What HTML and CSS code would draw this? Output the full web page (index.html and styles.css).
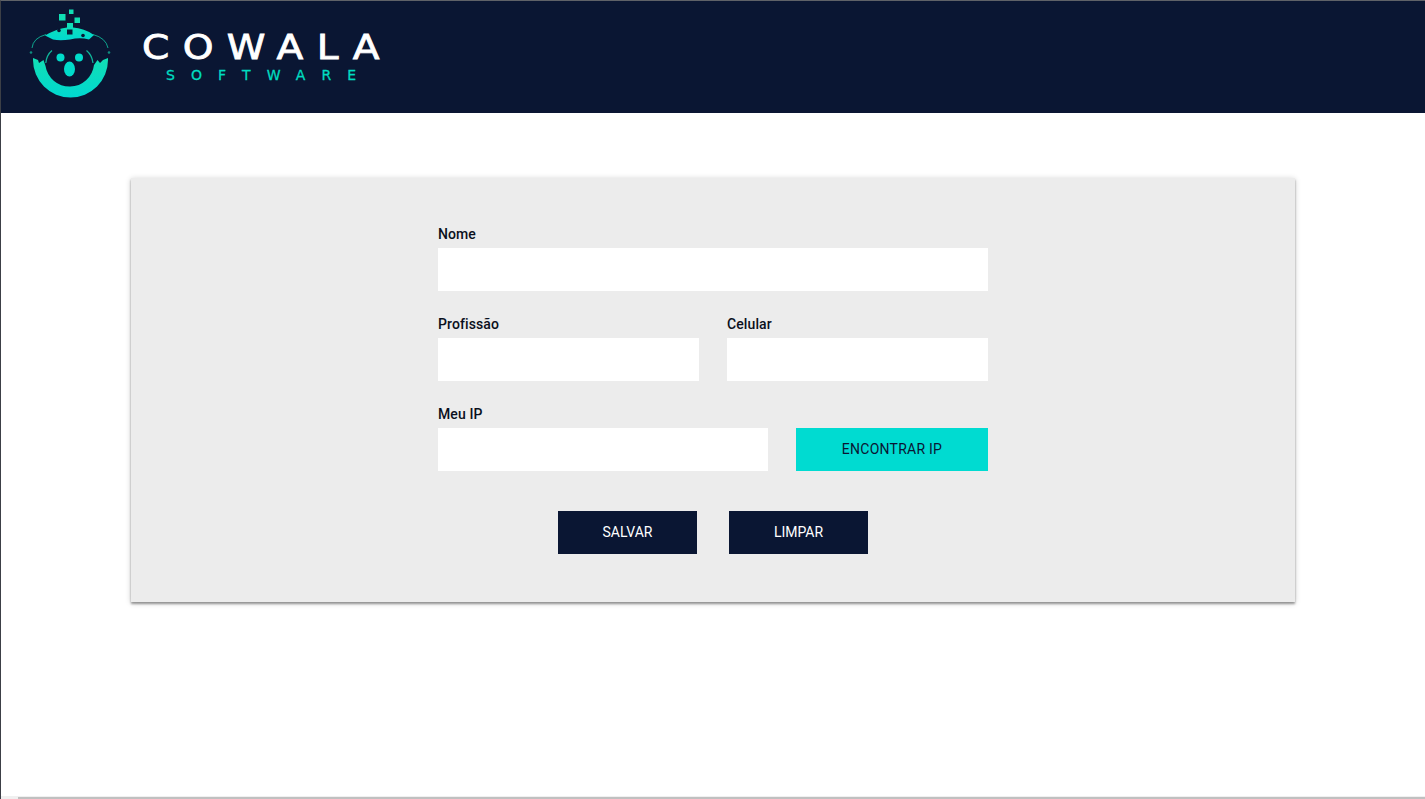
FILE: index.html
```html
<!DOCTYPE html>
<html lang="pt-BR">
<head>
    <meta charset="UTF-8">
    <meta name="viewport" content="width=device-width, initial-scale=1.0">
    <title>Cowala Software</title>
    <link rel="stylesheet" href="styles.css">
</head>
<body>
    <header class="topbar">
        <svg class="logo-icon" viewBox="1 1 129 112" width="129" height="112" aria-hidden="true">
            <defs>
                <linearGradient id="tealFade" x1="0" y1="0" x2="0" y2="1">
                    <stop offset="0" stop-color="#12dfb4"/>
                    <stop offset="1" stop-color="#00d8d0"/>
                </linearGradient>
            </defs>
            <rect x="59" y="14" width="6.500" height="6.500" fill="#10dfb4"/>
            <rect x="69" y="9.500" width="4.500" height="4.500" fill="#10dfb4"/>
            <rect x="74.500" y="17.500" width="5.500" height="5.500" fill="#10dfb4"/>
            <path d="M45 35.500Q56 29 67 27.500V23H73V27.500Q84 28 94 35L89 39.500Q80 37 70 39.500Q60 41 53 39.500Z" fill="url(#tealFade)"/>
            <rect x="67" y="29.500" width="5.500" height="5" fill="#0a1633"/>
            <circle cx="59" cy="30.500" r="1.800" fill="#0a1633"/>
            <circle cx="83" cy="35.500" r="1.800" fill="#0a1633"/>
            <path d="M33 58L38 60L39 63L43.500 60L45.500 66A24.500 24.500 0 0 0 94 65L97.500 60L100 63L103 60L108 58L108 60A37.500 37.500 0 0 1 33 60Z" fill="url(#tealFade)"/>
            <path d="M45.800 63Q46.500 55 52 50.500M93 63Q92 55 86.500 50.500" fill="none" stroke="#10dfb4" stroke-width="1.200" stroke-opacity="0.800"/>
            <path d="M32 48Q33 38 46 34.500M108 48Q106 38 93 34.500" fill="none" stroke="#10dfb4" stroke-width="1" stroke-opacity="0.700"/>
            <circle cx="31" cy="52.500" r="1.300" fill="#10dfb4" fill-opacity="0.600"/>
            <circle cx="109" cy="52.500" r="1.300" fill="#10dfb4" fill-opacity="0.600"/>
            <circle cx="60.500" cy="57.500" r="4" fill="#00dccb"/>
            <circle cx="79" cy="57.500" r="4" fill="#00dccb"/>
            <ellipse cx="69.500" cy="69" rx="5.500" ry="7.500" fill="#00dccb"/>
        </svg>
        <div class="logo-text">
            <span class="logo-name">COWALA</span>
            <span class="logo-sub">SOFTWARE</span>
        </div>
    </header>

    <main class="content">
        <form class="card">
            <div class="fields">
                <div class="row">
                    <div class="field grow">
                        <label for="nome">Nome</label>
                        <input type="text" id="nome" name="nome">
                    </div>
                </div>
                <div class="row">
                    <div class="field grow">
                        <label for="profissao">Profissão</label>
                        <input type="text" id="profissao" name="profissao">
                    </div>
                    <div class="field grow">
                        <label for="celular">Celular</label>
                        <input type="text" id="celular" name="celular">
                    </div>
                </div>
                <div class="row">
                    <div class="field grow">
                        <label for="ip">Meu IP</label>
                        <input type="text" id="ip" name="ip">
                    </div>
                    <button type="button" class="btn btn-ip">ENCONTRAR IP</button>
                </div>
            </div>
            <div class="actions">
                <button type="submit" class="btn btn-dark">SALVAR</button>
                <button type="reset" class="btn btn-dark">LIMPAR</button>
            </div>
        </form>
    </main>

    <div class="scrollbar"><div class="scrollbar-thumb"></div></div>
</body>
</html>
```

FILE: styles.css
```css
html, body {
    height: 100%;
}
body {
    margin: 0;
    border-left: 1px solid #3c3f46;
    border-top: 1px solid #5f6268;
    box-sizing: border-box;
    background-color: #fff;
    font-family: Roboto, "Liberation Sans", sans-serif;
    color: #0a1633;
    display: flex;
    flex-direction: column;
    overflow: hidden;
}
.topbar {
    height: 112px;
    flex-shrink: 0;
    background-color: #0a1633;
    display: flex;
    align-items: flex-start;
}
.logo-icon {
    display: block;
    flex-shrink: 0;
}
.logo-text {
    display: flex;
    flex-direction: column;
    font-family: "DejaVu Sans", sans-serif;
    padding: 27px 0 0 12px;
}
.logo-name {
    color: #fff;
    font-size: 34px;
    line-height: 39px;
    letter-spacing: 11.600px;
    -webkit-text-stroke: 0.8px #fff;
    transform: scaleX(1.150);
    transform-origin: left center;
}
.logo-sub {
    color: #00dcc0;
    font-size: 14px;
    line-height: 16px;
    letter-spacing: 16.100px;
    padding-left: 24px;
    -webkit-text-stroke: 0.3px #00dcc0;
}
.content {
    flex: 1;
    padding: 65px 130px 0;
}
.card {
    height: 424px;
    box-sizing: border-box;
    padding: 48px 0 0;
    background-color: #ececec;
    box-shadow: 0 2px 2px rgba(0, 0, 0, 0.35), 0 1px 6px rgba(0, 0, 0, 0.2);
    display: flex;
    flex-direction: column;
    align-items: center;
}
.fields {
    width: 550px;
    display: flex;
    flex-direction: column;
    gap: 25px;
}
.row {
    display: flex;
    align-items: flex-end;
    gap: 28px;
}
.field {
    display: flex;
    flex-direction: column;
}
.grow {
    flex: 1;
    min-width: 0;
}
label {
    font-size: 14px;
    font-weight: 500;
    line-height: 16px;
    letter-spacing: 0.100px;
    margin-bottom: 6px;
    color: #0a1020;
}
input {
    height: 43px;
    box-sizing: border-box;
    width: 100%;
    border: none;
    outline: none;
    padding: 0 12px;
    background: #fff;
    font-size: 14px;
}
.btn {
    height: 43px;
    border: none;
    cursor: pointer;
    font-family: inherit;
    font-size: 14px;
    padding: 0 0 2px;
}
.btn-ip {
    width: 192px;
    flex-shrink: 0;
    background-color: #00dbd1;
    color: #0a1633;
    letter-spacing: 0.250px;
}
.actions {
    display: flex;
    gap: 32px;
    margin-top: 40px;
}
.btn-dark {
    width: 139px;
    background-color: #0a1633;
    color: #fff;
}
.scrollbar {
    height: 3px;
    flex-shrink: 0;
    background-color: #f0f0f0;
    padding-left: 17px;
}
.scrollbar-thumb {
    height: 2px;
    margin-top: 1px;
    background-color: #c0c0c0;
}
```
